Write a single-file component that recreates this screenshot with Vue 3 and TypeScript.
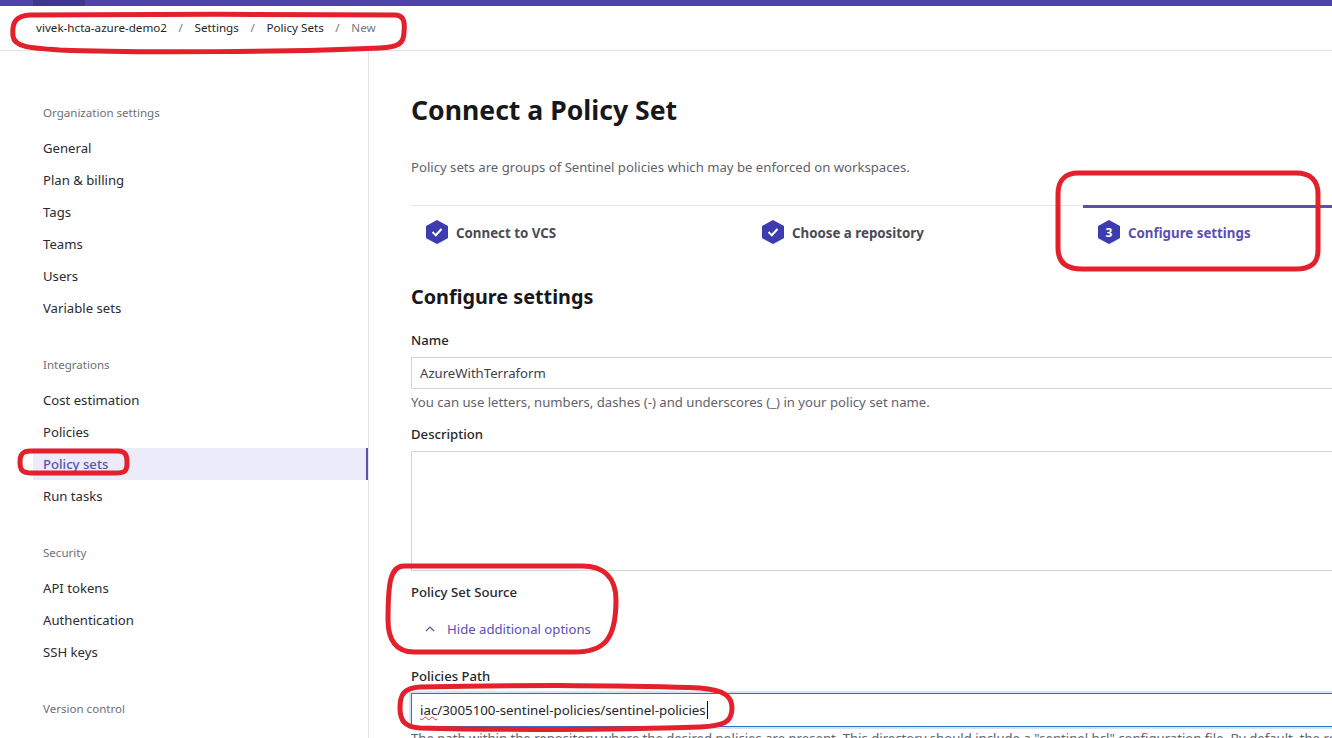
<script setup lang="ts">
interface NavGroup {
  title: string
  items: string[]
}

const crumbs = ['vivek-hcta-azure-demo2', 'Settings', 'Policy Sets']

const groups: NavGroup[] = [
  {
    title: 'Organization settings',
    items: ['General', 'Plan & billing', 'Tags', 'Teams', 'Users', 'Variable sets'],
  },
  { title: 'Integrations', items: ['Cost estimation', 'Policies', 'Policy sets', 'Run tasks'] },
  { title: 'Security', items: ['API tokens', 'Authentication', 'SSH keys'] },
  { title: 'Version control', items: [] },
]

const steps = [
  { label: 'Connect to VCS', done: true },
  { label: 'Choose a repository', done: true },
  { label: 'Configure settings', done: false },
]
</script>

<template>
  <div class="page">
    <div class="topbar"><span class="topbar-org"></span></div>

    <nav class="crumbs">
      <template v-for="c in crumbs" :key="c">
        <span class="crumb">{{ c }}</span>
        <span class="sep">/</span>
      </template>
      <span class="crumb-last">New</span>
    </nav>

    <div class="body">
      <aside class="sidebar">
        <section v-for="g in groups" :key="g.title" class="nav-group">
          <h4 class="nav-title">{{ g.title }}</h4>
          <a
            v-for="item in g.items"
            :key="item"
            class="nav-item"
            :class="{ active: item === 'Policy sets' }"
          >{{ item }}</a>
        </section>
      </aside>

      <main class="main">
        <h1 class="title">Connect a Policy Set</h1>
        <p class="lead">Policy sets are groups of Sentinel policies which may be enforced on workspaces.</p>

        <div class="steps">
          <div v-for="(s, i) in steps" :key="s.label" class="step" :class="{ current: !s.done }">
            <svg class="hex" width="24" height="28" viewBox="0 0 24 28">
              <path d="M12 4 L23 10 V20 L12 26 L1 20 V10 Z" fill="#e4e3f5" />
              <path d="M12 1 L23 7 V19 L12 25 L1 19 V7 Z" fill="#3c3cb0" />
              <path v-if="s.done" d="M7.5 13 L10.8 16.2 L16.5 10" fill="none" stroke="#fff" stroke-width="2" />
              <text v-else x="12" y="17.5" text-anchor="middle" class="hex-num">{{ i + 1 }}</text>
            </svg>
            <span class="step-label">{{ s.label }}</span>
          </div>
        </div>

        <h2 class="subtitle">Configure settings</h2>

        <label class="label">Name</label>
        <div class="input">AzureWithTerraform</div>
        <p class="hint">You can use letters, numbers, dashes (-) and underscores (_) in your policy set name.</p>

        <label class="label desc-label">Description</label>
        <div class="textarea"></div>

        <label class="label source-label">Policy Set Source</label>
        <a class="toggle">
          <svg width="10" height="6" viewBox="0 0 10 6">
            <path d="M1 5 L5 1 L9 5" fill="none" stroke="#5a4fb5" stroke-width="1.2" />
          </svg>
          <span>Hide additional options</span>
        </a>

        <label class="label path-label">Policies Path</label>
        <div class="input focused">
          <span class="typed"><span class="squiggle">iac</span>/3005100-sentinel-policies/sentinel-policies</span>
        </div>
        <p class="hint path-hint">The path within the repository where the desired policies are present. This directory should include a "sentinel.hcl" configuration file. By default, the root of the repository is used.</p>
      </main>
    </div>

    <!-- red marker annotations drawn on top of the screenshot -->
    <svg class="marks" width="1332" height="738" viewBox="0 0 1332 738">
      <g fill="none" stroke="#e3202b" stroke-width="5">
        <path d="M30 15 C120 14 300 14 396 15 C404 16 405 22 404 32 C404 44 398 47 380 48 C300 52 130 53 60 50 C30 48 14 47 13 36 C12 24 14 16 30 15 Z" />
        <path d="M1078 173 H1296 C1310 173 1318 180 1318 194 V250 C1318 264 1310 269 1296 269 H1082 C1066 269 1058 262 1058 248 V194 C1058 180 1066 173 1078 173 Z" />
        <path d="M30 451 H118 C126 451 127 456 127 463 C127 471 125 473 116 473 H32 C22 473 20 470 20 462 C20 455 22 451 30 451 Z" />
        <path d="M404 566 H582 C604 566 616 578 616 600 C616 640 604 652 574 652 H414 C396 652 388 640 388 620 C388 584 390 566 404 566 Z" />
        <path d="M420 687 C520 685 640 685 700 688 C724 690 732 696 732 708 C732 722 724 726 700 727 C610 730 490 730 420 728 C404 727 400 720 400 708 C400 694 404 688 420 687 Z" />
      </g>
    </svg>
  </div>
</template>

<style scoped>
.page {
  position: relative;
  width: 1332px;
  height: 738px;
  overflow: hidden;
  background: #fff;
  font-family: 'Noto Sans', 'Open Sans', sans-serif;
  font-size: 13.15px;
  color: #2b2b33;
}

.topbar {
  height: 6px;
  background: #5043ae;
}

.topbar-org {
  display: block;
  width: 52px;
  height: 6px;
  margin-left: 33px;
  background: #3f3690;
}

.crumbs {
  display: flex;
  align-items: center;
  height: 45px;
  padding-left: 36px;
  padding-bottom: 2px;
  border-bottom: 1px solid #e4e4e6;
  font-size: 11.65px;
  color: #1f1f26;
  box-sizing: border-box;
}

.sep {
  margin: 0 11.6px;
  color: #77777f;
}

.crumb-last {
  color: #77777f;
}

.body {
  display: flex;
}

.sidebar {
  flex: 0 0 369px;
  box-sizing: border-box;
  height: 688px;
  padding: 50px 0 0 33px;
  border-right: 1px solid #e4e4e6;
}

.nav-group {
  margin-bottom: 29px;
}

.nav-title {
  margin: 0 0 7px;
  padding-left: 10px;
  height: 24px;
  line-height: 24px;
  font-size: 11.55px;
  font-weight: 400;
  color: #6f7079;
}

.nav-item {
  display: block;
  height: 32px;
  line-height: 32px;
  padding-left: 10px;
  color: #2b2b33;
}

.nav-item.active {
  background: #ecebfa;
  color: #5a4fb5;
  font-weight: 500;
  border-right: 2px solid #5a4fb5;
}

.main {
  flex: none;
  width: 1000px;
  padding-left: 42px;
  box-sizing: border-box;
}

.title {
  margin: 41px 0 0;
  font-size: 26.6px;
  line-height: 36px;
  font-weight: 700;
  color: #17171c;
}

.lead {
  margin: 29px 0 0;
  line-height: 20px;
  color: #62626b;
}

.steps {
  display: grid;
  grid-template-columns: 336px 336px 336px;
  margin-top: 28px;
  border-top: 1px solid #e8e8ea;
}

.step {
  display: flex;
  align-items: center;
  gap: 7px;
  height: 50px;
  padding-left: 14px;
  margin-top: -1px;
  border-top: 3px solid transparent;
  font-weight: 700;
  font-size: 13.3px;
  color: #4b4b55;
}

.step.current {
  border-top-color: #5a4fb5;
  color: #5a4fb5;
}

.hex {
  flex: none;
}

.hex-num {
  fill: #fff;
  font-size: 12px;
  font-weight: 700;
}

.subtitle {
  margin: 25px 0 0;
  font-size: 19.8px;
  line-height: 28px;
  font-weight: 700;
  color: #17171c;
}

.label {
  display: block;
  margin-top: 19px;
  line-height: 20px;
  font-weight: 500;
  color: #26262d;
}

.input {
  box-sizing: border-box;
  width: 960px;
  height: 32px;
  line-height: 30px;
  margin-top: 7px;
  padding-left: 8px;
  border: 1px solid #d4d4d8;
  color: #40404a;
}

.hint {
  margin: 4px 0 0;
  line-height: 18px;
  color: #62626b;
}

.desc-label {
  margin-top: 13px;
}

.textarea {
  box-sizing: border-box;
  width: 960px;
  height: 120px;
  margin-top: 7px;
  border: 1px solid #d4d4d8;
}

.source-label {
  margin-top: 11px;
}

.toggle {
  display: flex;
  align-items: center;
  gap: 12px;
  margin-top: 17px;
  padding-left: 14px;
  line-height: 20px;
  color: #5a4fb5;
}

.path-label {
  margin-top: 27px;
  height: 20px;
}

.input.focused {
  height: 34px;
  margin-top: 7px;
  line-height: 32px;
  font-size: 13.3px;
  border: 1px solid #2f6fc4;
  box-shadow: 0 0 0 2px #d6e4f7;
  color: #26262d;
}

.typed {
  padding-right: 1px;
  border-right: 1px solid #111;
}

.squiggle {
  text-decoration: underline wavy #d04040 1px;
}

.path-hint {
  margin-top: 2px;
  white-space: nowrap;
}

.marks {
  position: absolute;
  left: 0;
  top: 0;
  pointer-events: none;
}
</style>

<style>
html,
body {
  overflow: hidden;
}
</style>
